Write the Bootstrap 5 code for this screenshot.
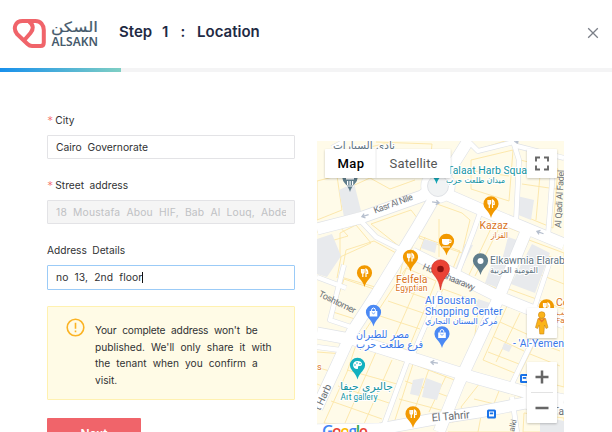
<!DOCTYPE html>
<html lang="en">
<head>
<meta charset="utf-8">
<meta name="viewport" content="width=device-width, initial-scale=1">
<title>Alsakn - Location</title>
<link href="https://cdn.jsdelivr.net/npm/bootstrap@5.3.0/dist/css/bootstrap.min.css" rel="stylesheet">
<style>
body{height:432px;overflow:hidden;background:#fff;color:#303133;font-family:Inter,"Noto Sans",sans-serif;font-size:10px}
.top-bar{height:68px;padding:0 6px 0 12px}
.step-title{font-size:15px;font-weight:600;color:#1f2a44;word-spacing:6px;margin:-5px 0 0 19px;line-height:20px}
.step-title span{margin:0 2px 0 2.5px}
.close-btn{width:26px;height:26px;margin-top:-2px}
.step-track{height:4px;background:#f4f4f5;border-radius:0}
.step-fill{width:121px;background:linear-gradient(90deg,#1890ec,#7fcfc4)}
.form-side{width:248px;margin-left:47px;padding-top:40px}
.field{height:65px}
.field label{height:16px;line-height:16px;margin-bottom:7px;font-size:10.2px;word-spacing:2.6px;display:block}
.field label b{color:#f56c6c;font-weight:400;margin-right:2px;font-family:"DejaVu Sans Mono",monospace;font-size:10.5px;line-height:1}
.field .form-control{height:24px;padding:0 8px;font-size:10.3px;word-spacing:3px;border:1px solid #e3e3e6;border-radius:1px;color:#303133;line-height:22px}
.field .form-control:disabled{background:#f5f5f5;color:#bfc1c4;letter-spacing:.2px}
.field .is-current{height:25px;margin-top:-1px;border-color:#9bcbf7;box-shadow:none;letter-spacing:.12px;line-height:23px}
.caret{display:inline-block;width:1px;height:11px;background:#111;vertical-align:-2px}
.notice{height:94px;margin-top:-1px;background:#fffbe6;border:1px solid #fff1b0;border-radius:1px;padding:11px 18px}
.notice p{font-size:10.2px;line-height:16.6px;word-spacing:3.2px;margin:4px 0 0 10px;white-space:nowrap}
.notice .tight{letter-spacing:-.2px}
.next-btn{width:94px;height:32px;margin-top:18px;background:#f0646a;color:#fff;border:0;border-radius:1px;font-size:12px;font-weight:600;padding:0}
.map-side{width:247px;height:291px;margin:69px 0 0 22px}
.map-side svg{display:block}
</style>
<script src="https://cdn.jsdelivr.net/npm/bootstrap@5.3.0/dist/js/bootstrap.bundle.min.js"></script>
</head>
<body>
<header class="top-bar d-flex align-items-center">
  <svg width="88" height="36" viewBox="12 15 88 36">
    <g fill="none" stroke="#f0646a" stroke-width="4" stroke-linejoin="round">
      <path d="M17 33C12.500 27 15.500 20 22.500 20H35.500C40.500 20 43.800 24 43.800 29V41.500Q43.800 45 40.500 45H32Q29.500 45 27.500 43Z"/>
      <path d="M29 20.500C34 24 33.500 28.500 30.500 32L24 39.500"/>
    </g>
    <text x="51" y="31" font-family="Noto Sans CJK SC,DejaVu Sans,sans-serif" font-size="14" fill="#465a6c" stroke="#465a6c" stroke-width=".2" textLength="47" lengthAdjust="spacingAndGlyphs">السكن</text>
    <text x="51.500" y="45" font-family="Noto Sans,sans-serif" font-size="12" font-weight="600" fill="#465a6c" textLength="46.500" lengthAdjust="spacingAndGlyphs">ALSAKN</text>
  </svg>
  <h1 class="step-title">Step 1 <span>:</span> Location</h1>
  <button class="close-btn btn p-0 border-0 ms-auto d-flex align-items-center justify-content-center" aria-label="Close">
    <svg width="12" height="12" viewBox="0 0 12 12" stroke="#7b7f88" stroke-width="1.300"><path d="M1.200 1.200l9.600 9.600M10.800 1.200l-9.600 9.600"/></svg>
  </button>
</header>
<div class="progress step-track"><div class="progress-bar step-fill"></div></div>
<main class="d-flex">
  <form class="form-side flex-shrink-0">
    <div class="field"><label><b>*</b>City</label><input class="form-control" value="Cairo Governorate"></div>
    <div class="field"><label><b>*</b>Street address</label><input class="form-control" disabled value="18 Moustafa Abou HIF, Bab Al Louq, Abdeen"></div>
    <div class="field"><label class="mb-0 pb-0">Address Details</label><div class="pt-2"><div class="form-control is-current">no 13, 2nd floor<span class="caret"></span></div></div></div>
    <div class="notice d-flex align-items-start">
      <svg class="flex-shrink-0" width="19" height="19" viewBox="0 0 19 19" fill="none" stroke="#fbb324" stroke-width="1.600"><circle cx="9.500" cy="9.500" r="8.300"/><path d="M9.500 4.800v6M9.500 12.500v1.700"/></svg>
      <p><span class="tight">Your complete address won't be</span><br>published. We'll only share it with<br>the tenant when you confirm a<br>visit.</p>
    </div>
    <button type="button" class="btn next-btn">Next</button>
  </form>
  <section class="map-side flex-shrink-0">
    <svg width="247" height="291" viewBox="317 141 247 291" font-family="Roboto,sans-serif">
      <defs>
        <filter id="soft" x="-20%" y="-20%" width="140%" height="150%"><feDropShadow dx="0" dy="1" stdDeviation="1" flood-opacity=".22"/></filter>
        <path id="pin" d="M0 0C-1-4-2.500-5.500-5-8.500A7.600 7.600 0 1 1 5-8.500C2.500-5.500 1-4 0 0Z"/>
        <g id="eat"><use href="#pin" fill="#f29900"/><path d="M-3-18v3q0 1.500 1.300 1.500T-.400-15v-3M-1.700-18v8M1.500-10v-8q2 1 1.700 4.500H1.500" fill="none" stroke="#fff" stroke-width="1.200"/></g>
        <g id="shop"><use href="#pin" fill="#4b89f4"/><path d="M-3.800-15.500h7.600v5.500h-7.600z" fill="#fff"/><path d="M-2-15.500q0-3 2-3t2 3" fill="none" stroke="#fff"/><path d="M-1.700-14q1.700 2.500 3.400 0" fill="none" stroke="#4b89f4" stroke-width=".8"/></g>
        <g id="bus"><rect width="9" height="9" rx="1.500" fill="#1a73e8"/><path d="M2 2h5v5H2z" fill="#fff"/><path d="M2.800 3h3.400v1.800H2.800z" fill="#1a73e8"/></g>
        <path id="arrow" d="M8 0H1M4-2.200L1 0l3 2.200" fill="none" stroke="#b6bfce" stroke-width="1.300"/>
        <path id="streets" d="M317 229L360 218L422 196L438 184M437 185L456 160L468 141M440 188L418 226L376 295L352 332L317 408M441 192L489 213L564 244M412 253L499 297L564 323M526 232L499 297L459 383L439 432M317 333L355 340L409 357L472 377L529 393L564 400M317 430L380 429L440 418L479 412L525 403L564 409"/>
        <path id="lanes" d="M409 357L382 430M480 213L474 230L458 272M440 292L412 356M545 315L509 390M359 219L376 237L404 251M344 265L330 320L354 328M317 277L346 288M513 141L519 160L516 222M513 145L564 158M345 141L332 148M553 170L548 236M512 397L517 432M317 347L340 350M468 141L478 151L514 142M549 264L535 306"/>
      </defs>
      <path fill="#fffbe9" d="M317 141h247v291H317z"/>
      <!-- building plots -->
      <g fill="#fffbe9" stroke="#fce5a6" stroke-width=".9">
        <path d="M317 181l20-5 5 34-25 10zM348 188l22-10 20 11 25-9M360 171l35-10 18 17M376 142l56 2-3 29-30-12M352 151l36-8M317 232l22-6 9 10-31 9M340 233l16-8 15 18-31 14zM371 224l40-14 7 9-18 28zM346 250l28-9 22 12-21 34-34-10zM319 249l22 8-4 21M344 279l30 10-19 30-22-7z"/>
        <path d="M421 219l16-15 25 9 8 7-8 33-43-15zM417 235l43 16-8 20-42-18zM439 219v38M425 237l-7 18M414 250l-12 29-12-5M405 252l-7 31M443 289l55 20-31 69-54-19zM406 268l30 13-28 69-47-13zM396 288l35 12M388 301l38 13M380 316l40 13M421 277l-29 66M478 312l-7 52"/>
        <path d="M471 160l42-10-4 51-38-12zM480 149l25-8h12l2 23M475 171l34 5M520 160l38 9-5 59-34-14zM522 184l34 5M541 164l-5 56M494 222l28 11-22 57-32-13zM500 226l-25 50M529 240l35 13v56l-58-21zM543 254l21 8M536 273l28 11M507 306l33 13-23 55-34-14zM520 313l-24 49M500 322l31 14M494 337l30 14M488 352l31 12M546 321l18 6v60l-45-12zM536 342l24 9M530 354l30 12"/>
        <path d="M356 345l49 17-24 66-57-5 23-51zM347 370l50 14M338 386l51 17M331 401l51 18M376 352l-31 71M392 360l-28 64M413 364l49 19-15 31-53 9zM405 381l47 17M399 399l49 13M429 369l-17 48M446 376l-17 36M480 383l41 14-5 6-48 14-7-10zM474 399l33 8M499 391l-8 20M317 352l27 2-26 44M319 368l18 5M317 384l12 5M395 428l49-6-4 10M452 422l60-13 4 23h-68M481 416l-3 16M524 413l40 5v14h-41z"/>
      </g>
      <g fill="#e8eaed">
        <path d="M339 190l15-7 7 28-17 6zM317 239l15-5 9 22-14 21-10-3zM424 239l13 4-2 10-14-5zM508 237l12 4-19 48-16-6 9-26 8 3zM532 244l18 9-15 40-24-9zM517 196l17 4-3 20-15-6zM426 378l16 6-5 16-15-3zM413 380l11-2-5 18-9-2zM504 343l8 3-3 6-7-3zM465 244l8 1-12 25-5-2zM540 416l24 5v11h-24zM478 299l15 5-5 10-14-4z"/>
      </g>
      <g fill="none" stroke-linejoin="round">
        <use href="#lanes" stroke="#dfe2e7" stroke-width="5.500"/>
        <use href="#streets" stroke="#dfe2e7" stroke-width="12.500"/>
        <circle cx="438" cy="186" r="17" fill="#fff" stroke="#dfe2e7" stroke-width=".7"/>
        <use href="#lanes" stroke="#fff" stroke-width="4.300"/>
        <use href="#streets" stroke="#fff" stroke-width="11.300"/>
      </g>
      <circle cx="438" cy="186" r="16.500" fill="#fff"/>
      <circle cx="438" cy="186" r="10.500" fill="#f1f3f4" stroke="#d9dce1" stroke-width=".8"/>
      <use href="#arrow" transform="translate(361 217) rotate(-18)"/><use href="#arrow" transform="translate(440 203) rotate(188)"/><use href="#arrow" transform="translate(536 231) rotate(20)"/><use href="#arrow" transform="translate(430 362) rotate(8)"/><use href="#arrow" transform="translate(518 144) rotate(245)"/>
      <!-- street names -->
      <g fill="#6b7075" font-size="9">
        <text transform="translate(375 213.500) rotate(-20)" textLength="41">Kasr Al Nile</text>
        <text transform="translate(422 269) rotate(23)" textLength="56">Hoda Shaarawy</text>
        <text transform="translate(318 296) rotate(26)" textLength="40">Toshtomer</text>
        <text transform="translate(320 411) rotate(-65)" font-size="10">t Harb</text>
        <text transform="translate(561 228) rotate(-87)" textLength="58">Al Qadi Al Fadel</text>
        <text transform="translate(432 421.500) rotate(-5)" font-size="11" textLength="38">El Tahrir</text>
        <text x="553" y="415" font-size="10">Ta</text>
        <text transform="translate(514 432) rotate(-77)" font-size="8">alki</text>
      </g>
      <!-- place pins -->
      <g><use href="#pin" x="350" y="192" fill="#607d8b"/><path d="M346 178h8v1.500h-8zM347 181h1.200v4H347zm2.500 0h1.200v4h-1.200zm2.500 0h1.200v4H352zM346 185.500h8v1h-8z" fill="#fff"/></g>
      <use href="#pin" x="436.500" y="184" fill="#12a5b5"/>
      <use href="#eat" x="491" y="218"/><use href="#eat" x="410.500" y="271.500"/><use href="#eat" x="364.500" y="287"/><use href="#eat" x="413" y="428"/><use href="#eat" x="546.500" y="321"/>
      <use href="#pin" x="446.500" y="255.500" fill="#f29900"/><path d="M442 239h7.500v3q0 3-3 3h-1.500q-3 0-3-3zM442 246.500h8v1h-8z" fill="#fff"/><path d="M449 240h2v2.500h-2" fill="none" stroke="#fff"/>
      <use href="#pin" x="480.500" y="275" fill="#607d8b"/><circle cx="480.500" cy="261" r="3" fill="#fff"/>
      <use href="#shop" x="373.500" y="326.500"/><use href="#shop" x="442" y="348"/>
      <use href="#pin" x="357.500" y="379.500" fill="#12b0bf"/><path d="M357.500 361q-4 0-4.500 4 .5 4 4 4 1.500 0 1-1.500t1-1.500q3 0 3-2-.5-3-4.500-3z" fill="#fff"/><g fill="#12b0bf"><circle cx="355" cy="365" r=".8"/><circle cx="357" cy="363" r=".8"/><circle cx="360" cy="363.700" r=".8"/></g>
      <path d="M440.500 290C439 281 437 279 434 275A9 9 0 1 1 447 275C444 279 442 281 440.500 290Z" fill="#ea4335" stroke="#c5221f" stroke-width=".5"/><circle cx="440.500" cy="269" r="3.300" fill="#8b1210"/>
      <use href="#bus" x="487" y="409.500"/><use href="#bus" x="520" y="374"/>
      <!-- place names -->
      <g stroke="#fff" stroke-width="2" stroke-linejoin="round" paint-order="stroke" font-size="10.500">
        <g fill="#5f7482"><text x="333" y="149" textLength="62" lengthAdjust="spacingAndGlyphs" font-family="DejaVu Sans,sans-serif">نادى السيارات</text>
        <text x="490" y="264" textLength="75">Elkawmia Elarab</text><text x="490" y="273" font-size="8.500" textLength="48" lengthAdjust="spacingAndGlyphs" font-family="DejaVu Sans,sans-serif">القومية العربية</text></g>
        <g fill="#12939f"><text x="447" y="174" textLength="80">Talaat Harb Squa</text><text x="446" y="183" font-size="8.500" textLength="59" lengthAdjust="spacingAndGlyphs" font-family="DejaVu Sans,sans-serif">ميدان طلعت حرب</text>
        <text x="340" y="390" textLength="53" lengthAdjust="spacingAndGlyphs" font-family="DejaVu Sans,sans-serif">جاليري حيفا</text><text x="340.500" y="399.500" font-size="8.500" textLength="37">Art gallery</text></g>
        <g fill="#d9731a"><text x="479.500" y="229" textLength="28.500">Kazaz</text><text x="491" y="238" font-size="8.500" textLength="17" lengthAdjust="spacingAndGlyphs" font-family="DejaVu Sans,sans-serif">القزاز</text>
        <text x="396" y="282.500" textLength="31.500">Felfela</text><text x="395.500" y="291" font-size="8.500" textLength="32">Egyptian</text>
        <text x="556" y="306">Co</text><text x="556" y="315" font-size="8">وجب</text><text x="556" y="323" font-size="8">Fa</text><text x="317" y="370" font-size="9">s</text></g>
        <g fill="#3a78e8"><text x="425" y="304" textLength="51">Al Boustan</text><text x="425" y="314.500" textLength="77.500">Shopping Center</text><text x="425" y="324" font-size="8.500" textLength="72.500" lengthAdjust="spacingAndGlyphs" font-family="DejaVu Sans,sans-serif">مركز البستان التجاري</text>
        <text x="356" y="338" textLength="53" lengthAdjust="spacingAndGlyphs" font-family="DejaVu Sans,sans-serif">مصر للطيران</text><text x="356" y="348" textLength="67" lengthAdjust="spacingAndGlyphs" font-family="DejaVu Sans,sans-serif">فرع طلعت حرب</text>
        <text x="513" y="347" textLength="51">- 'Al-Yemen</text></g>
      </g>
      <text x="322" y="437" font-family="Open Sans,sans-serif" font-size="16" font-weight="600" textLength="46" stroke="#fff" stroke-width="1.500" paint-order="stroke"><tspan fill="#4285f4">G</tspan><tspan fill="#ea4335">o</tspan><tspan fill="#fbbc04">o</tspan><tspan fill="#4285f4">g</tspan><tspan fill="#34a853">l</tspan><tspan fill="#ea4335">e</tspan></text>
      <!-- map controls -->
      <g fill="#fff" filter="url(#soft)"><rect x="325" y="149" width="125.500" height="29" rx="1"/><rect x="527" y="149" width="30" height="29" rx="1"/><rect x="527" y="308" width="30" height="30" rx="1"/><rect x="527" y="362" width="30" height="61" rx="1"/></g>
      <path d="M376 149v29" stroke="#ececec"/><path d="M531 392.500h22" stroke="#e3e3e3"/>
      <text x="337.500" y="168" font-size="13" font-weight="500" fill="#000" textLength="26.500">Map</text><text x="389.500" y="168" font-size="13" fill="#565656" textLength="48">Satellite</text>
      <path d="M536 161.500V157.500H540M544 157.500h4v4M548 165.500v4h-4M540 169.500h-4v-4" fill="none" stroke="#666" stroke-width="1.900"/>
      <path d="M535.500 377h13M542 370.500v13M535.500 408h13" stroke="#666" stroke-width="2.500"/>
      <g fill="#fbb41a" stroke="#c98410" stroke-width=".6"><path d="M538 318.500h7.500l2.500 9-2 1-1.500-3.500-.7 9h-4l-.8-9-1.500 3.500-2-1z"/><circle cx="541.700" cy="315" r="3.300"/></g><path d="M539 318.500l2.800 3 2.800-3" fill="none" stroke="#e8772e" stroke-width="1.200"/>
    </svg>
  </section>
</main>
</body>
</html>
